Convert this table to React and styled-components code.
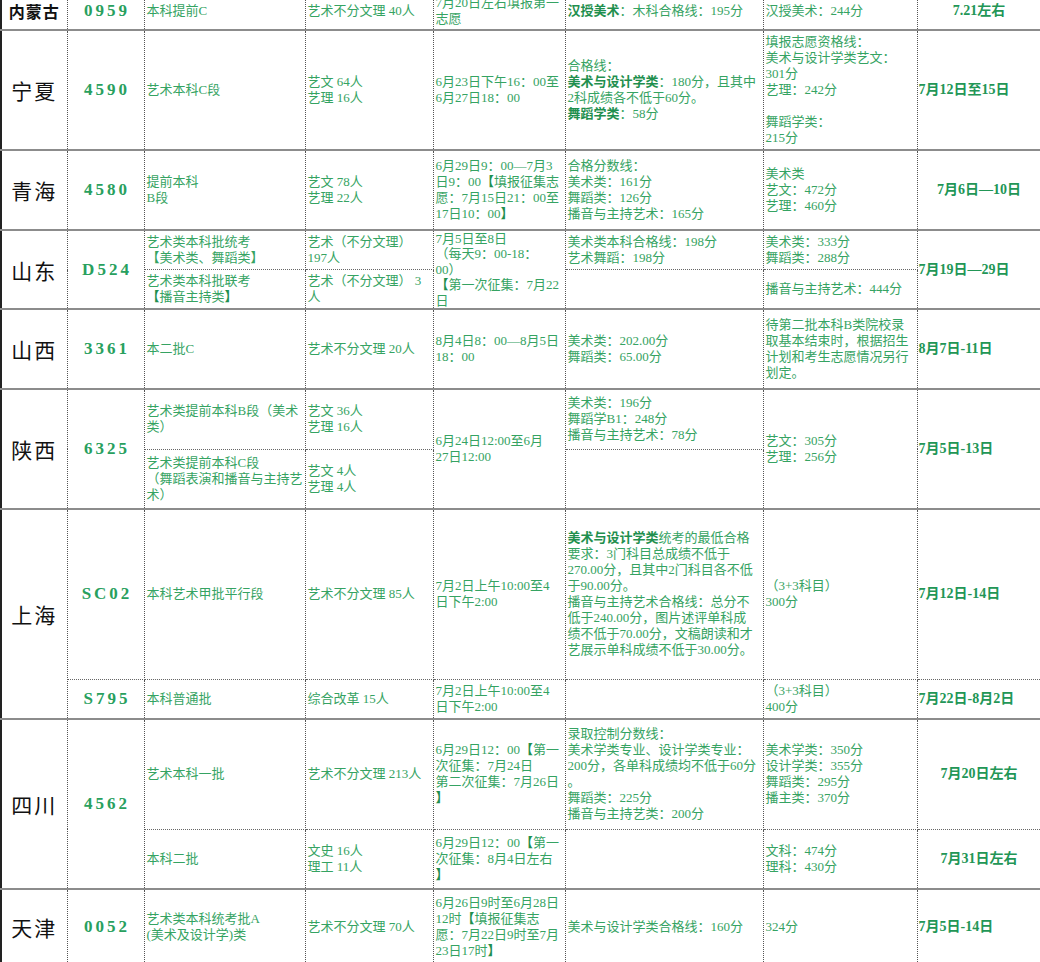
import React from 'react'
import styled, { createGlobalStyle } from 'styled-components'

const Global = createGlobalStyle`
  html, body { margin: 0; padding: 0; background: #ffffff; overflow: hidden; }
  body { font-family: "Liberation Serif", "Noto Sans CJK SC", serif; }
`

const Sheet = styled.table`
  width: 1040px;
  table-layout: fixed;
  border-collapse: collapse;
  margin-top: -8px;
  font-size: 13px;
  line-height: 16px;
  color: #35a362;
`

const Row = styled.tr`
  height: ${p => p.$h}px;
`

const Cell = styled.td`
  padding: 0 2px;
  vertical-align: ${p => p.$top ? 'top' : 'middle'};
  text-align: ${p => p.$center ? 'center' : 'left'};
  line-height: ${p => p.$tight ? '15.4px' : '16px'};
  border-left: 1px dotted #555;
  border-right: 1px dotted #555;
  border-bottom: ${p => p.$sub ? '1px dotted #666' : '2px solid #8c8c8c'};
  overflow: hidden;
  word-break: break-all;
`

const Province = styled(Cell)`
  text-align: center;
  color: #111;
  font-family: "Noto Sans CJK SC", sans-serif;
  font-size: ${p => p.$small ? '16px' : '21px'};
  font-weight: ${p => p.$small ? 700 : 400};
  letter-spacing: ${p => p.$small ? '1px' : '2px'};
  border-left: 2px solid #222;
`

const Code = styled(Cell)`
  text-align: center;
  font-size: 17px;
  font-weight: bold;
  letter-spacing: 3px;
  padding-left: 5px;
  color: #28a05e;
`

const DateCell = styled(Cell)`
  font-size: 14px;
  font-weight: bold;
  color: #229656;
  padding-left: ${p => p.$center ? '2px' : '1px'};
`

const B = styled.b`
  color: #1f8f4e;
`

export default function App() {
  return (
    <>
      <Global />
      <Sheet>
        <colgroup>
          <col style={{ width: 66 }} />
          <col style={{ width: 77 }} />
          <col style={{ width: 161 }} />
          <col style={{ width: 128 }} />
          <col style={{ width: 132 }} />
          <col style={{ width: 198 }} />
          <col style={{ width: 154 }} />
          <col style={{ width: 124 }} />
        </colgroup>
        <tbody>
          <Row $h={38}>
            <Province $small>内蒙古</Province>
            <Code>0959</Code>
            <Cell>本科提前C</Cell>
            <Cell>艺术不分文理 40人</Cell>
            <Cell>7月20日左右填报第一<br />志愿</Cell>
            <Cell><B>汉授美术</B>：木科合格线：195分</Cell>
            <Cell>汉授美术：244分</Cell>
            <DateCell $center>7.21左右</DateCell>
          </Row>

          <Row $h={120}>
            <Province>宁夏</Province>
            <Code>4590</Code>
            <Cell>艺术本科C段</Cell>
            <Cell>艺文 64人<br />艺理 16人</Cell>
            <Cell>6月23日下午16：00至<br />6月27日18：00</Cell>
            <Cell>合格线：<br /><B>美术与设计学类</B>：180分，且其中<br />2科成绩各不低于60分。<br /><B>舞蹈学类</B>：58分</Cell>
            <Cell>填报志愿资格线：<br />美术与设计学类艺文：<br />301分<br />艺理：242分<br /><br />舞蹈学类：<br />215分</Cell>
            <DateCell>7月12日至15日</DateCell>
          </Row>

          <Row $h={80}>
            <Province>青海</Province>
            <Code>4580</Code>
            <Cell>提前本科<br />B段</Cell>
            <Cell>艺文 78人<br />艺理 22人</Cell>
            <Cell>6月29日9：00—7月3<br />日9：00<B>【</B>填报征集志<br />愿：7月15日21：00至<br />17日10：00<B>】</B></Cell>
            <Cell>合格分数线：<br />美术类：161分<br />舞蹈类：126分<br />播音与主持艺术：165分</Cell>
            <Cell>美术类<br />艺文：472分<br />艺理：460分</Cell>
            <DateCell $center>7月6日—10日</DateCell>
          </Row>

          <Row $h={39}>
            <Province rowSpan={2}>山东</Province>
            <Code rowSpan={2}>D524</Code>
            <Cell $sub>艺术类本科批统考<br />【美术类、舞蹈类】</Cell>
            <Cell $sub>艺术（不分文理）<br />197人</Cell>
            <Cell rowSpan={2} $top $tight>7月5日至8日<br />（每天9：00-18：<br />00）<br /><B>【</B>第一次征集：7月22<br />日</Cell>
            <Cell $sub>美术类本科合格线：198分<br />艺术舞蹈：198分</Cell>
            <Cell $sub>美术类：333分<br />舞蹈类：288分</Cell>
            <DateCell rowSpan={2}>7月19日—29日</DateCell>
          </Row>
          <Row $h={39}>
            <Cell>艺术类本科批联考<br /><B>【</B>播音主持类<B>】</B></Cell>
            <Cell>艺术（不分文理） 3<br />人</Cell>
            <Cell></Cell>
            <Cell>播音与主持艺术：444分</Cell>
          </Row>

          <Row $h={80}>
            <Province>山西</Province>
            <Code>3361</Code>
            <Cell>本二批C</Cell>
            <Cell>艺术不分文理 20人</Cell>
            <Cell>8月4日8：00—8月5日<br />18：00</Cell>
            <Cell>美术类：202.00分<br />舞蹈类：65.00分</Cell>
            <Cell>待第二批本科B类院校录<br />取基本结束时，根据招生<br />计划和考生志愿情况另行<br />划定。</Cell>
            <DateCell>8月7日-11日</DateCell>
          </Row>

          <Row $h={60}>
            <Province rowSpan={2}>陕西</Province>
            <Code rowSpan={2}>6325</Code>
            <Cell $sub>艺术类提前本科B段（美术<br />类）</Cell>
            <Cell $sub>艺文 36人<br />艺理 16人</Cell>
            <Cell rowSpan={2}>6月24日12:00至6月<br />27日12:00</Cell>
            <Cell $sub>美术类：196分<br />舞蹈学B1：248分<br />播音与主持艺术：78分</Cell>
            <Cell rowSpan={2}>艺文：305分<br />艺理：256分</Cell>
            <DateCell rowSpan={2}>7月5日-13日</DateCell>
          </Row>
          <Row $h={60}>
            <Cell>艺术类提前本科C段<br />（舞蹈表演和播音与主持艺<br />术）</Cell>
            <Cell>艺文 4人<br />艺理 4人</Cell>
            <Cell></Cell>
          </Row>

          <Row $h={170}>
            <Province rowSpan={2}>上海</Province>
            <Code $sub>SC02</Code>
            <Cell $sub>本科艺术甲批平行段</Cell>
            <Cell $sub>艺术不分文理 85人</Cell>
            <Cell $sub>7月2日上午10:00至4<br />日下午2:00</Cell>
            <Cell $sub><B>美术与设计学类</B>统考的最低合格<br />要求：3门科目总成绩不低于<br />270.00分，且其中2门科目各不低<br />于90.00分。<br />播音与主持艺术合格线：总分不<br />低于240.00分，图片述评单科成<br />绩不低于70.00分，文稿朗读和才<br />艺展示单科成绩不低于30.00分。</Cell>
            <Cell $sub>（3+3科目）<br />300分</Cell>
            <DateCell $sub>7月12日-14日</DateCell>
          </Row>
          <Row $h={40}>
            <Code>S795</Code>
            <Cell>本科普通批</Cell>
            <Cell>综合改革 15人</Cell>
            <Cell>7月2日上午10:00至4<br />日下午2:00</Cell>
            <Cell></Cell>
            <Cell>（3+3科目）<br />400分</Cell>
            <DateCell>7月22日-8月2日</DateCell>
          </Row>

          <Row $h={110}>
            <Province rowSpan={2}>四川</Province>
            <Code rowSpan={2}>4562</Code>
            <Cell $sub>艺术本科一批</Cell>
            <Cell $sub>艺术不分文理 213人</Cell>
            <Cell $sub>6月29日12：00<B>【</B>第一<br />次征集：7月24日<br />第二次征集：7月26日<br /><B>】</B></Cell>
            <Cell $sub>录取控制分数线：<br />美术学类专业、设计学类专业：<br />200分，各单科成绩均不低于60分<br />。<br />舞蹈类：225分<br />播音与主持艺类：200分</Cell>
            <Cell $sub>美术学类：350分<br />设计学类：355分<br />舞蹈类：295分<br />播主类：370分</Cell>
            <DateCell $sub $center>7月20日左右</DateCell>
          </Row>
          <Row $h={60}>
            <Cell>本科二批</Cell>
            <Cell>文史 16人<br />理工 11人</Cell>
            <Cell>6月29日12：00<B>【</B>第一<br />次征集：8月4日左右<br /><B>】</B></Cell>
            <Cell></Cell>
            <Cell>文科：474分<br />理科：430分</Cell>
            <DateCell $center>7月31日左右</DateCell>
          </Row>

          <Row $h={76}>
            <Province>天津</Province>
            <Code>0052</Code>
            <Cell>艺术类本科统考批A<br />(美术及设计学)类</Cell>
            <Cell>艺术不分文理 70人</Cell>
            <Cell>6月26日9时至6月28日<br />12时<B>【</B>填报征集志<br />愿：7月22日9时至7月<br />23日17时<B>】</B></Cell>
            <Cell>美术与设计学类合格线：160分</Cell>
            <Cell>324分</Cell>
            <DateCell>7月5日-14日</DateCell>
          </Row>
        </tbody>
      </Sheet>
    </>
  )
}
